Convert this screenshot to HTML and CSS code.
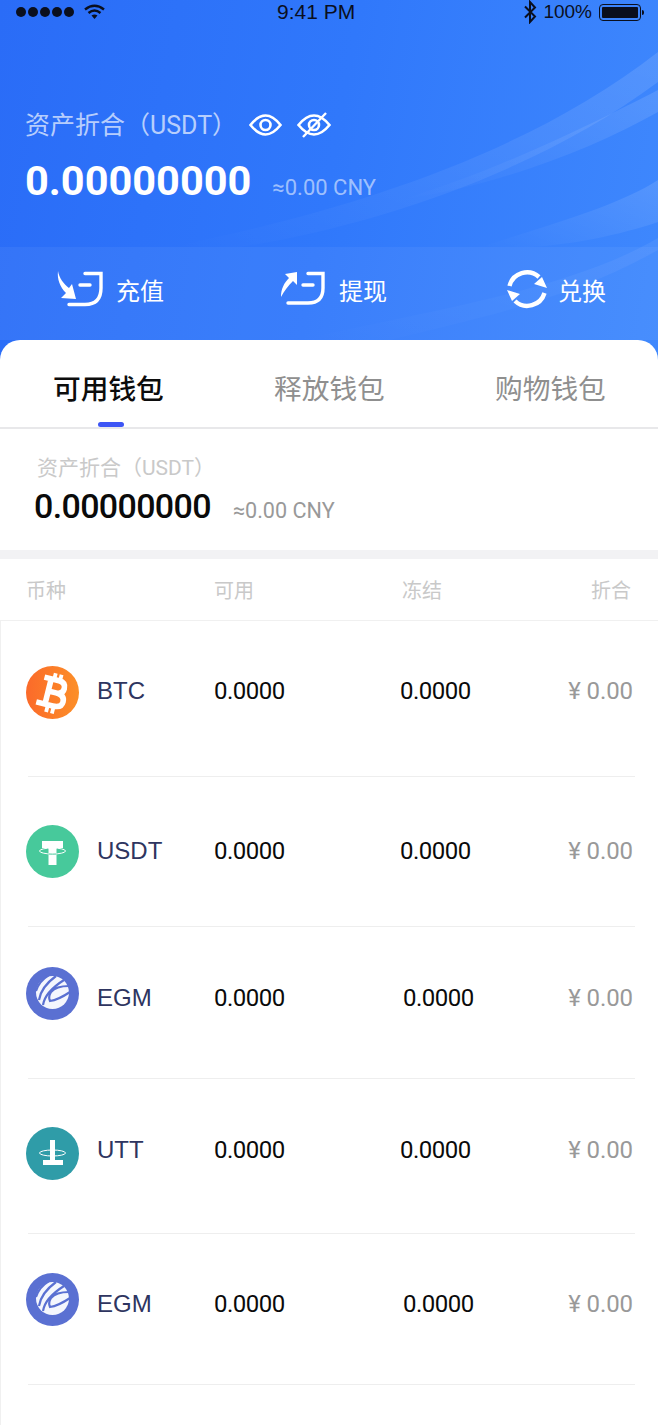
FILE: index.html
```html
<!DOCTYPE html>
<html>
<head>
	<meta http-equiv="Content-Type" content="text/html; charset=UTF-8">
	<title>资产</title>
	<link rel="stylesheet" href="styles.css">
</head>
<body>

<svg class="defs" width="0" height="0">
	<symbol id="egm-logo" viewBox="0 0 53 53">
		<circle cx="26.500" cy="26.500" r="26.500" fill="#5a70d2"/>
		<circle cx="26.500" cy="25.500" r="16.500" fill="#f4f6fd"/>
		<path d="M10 24 Q13 14 23 8 M13 33 Q15 20 30 9 M17 38 Q19 25 38 13 M43 19 Q30 19 25 25 Q22 30 24 34 Q32 33 44 25" fill="none" stroke="#5a70d2" stroke-width="2.200"/>
	</symbol>
</svg>

<header class="hero">
	<svg class="swoosh" viewBox="0 0 658 360" preserveAspectRatio="none">
		<defs>
			<linearGradient id="sw" x1="0" y1="1" x2="1" y2="0">
				<stop offset="0" stop-color="#fff" stop-opacity="0"/>
				<stop offset="1" stop-color="#fff" stop-opacity=".12"/>
			</linearGradient>
		</defs>
		<path d="M170 247 C330 215 520 160 658 52 V82 C540 170 380 225 240 247Z" fill="url(#sw)"/>
		<path d="M400 200 C500 170 600 120 658 90 V112 C590 150 500 185 400 200Z" fill="url(#sw)"/>
		<path d="M480 247 C550 225 620 205 658 180 V222 C620 235 570 245 530 247Z" fill="url(#sw)"/>
		<path d="M300 340 C430 310 570 290 658 238 V250 C570 300 470 320 390 340Z" fill="url(#sw)" opacity=".5"/>
	</svg>

	<div class="status">
		<div class="status-left">
			<span class="dots"><i></i><i></i><i></i><i></i><i></i></span>
			<svg width="21" height="16" viewBox="0 0 21 16"><path d="M1 5.500 Q10.500 -2 20 5.500 M4.500 9 Q10.500 4 16.500 9" fill="none" stroke="#0a0f1e" stroke-width="2.400"/><path d="M7.500 11.500 Q10.500 9.500 13.500 11.500 L10.500 15Z" fill="#0a0f1e"/></svg>
		</div>
		<div class="status-time">9:41 PM</div>
		<div class="status-right">
			<svg width="14" height="24" viewBox="0 0 14 24"><path d="M2 6.500 L12 16.500 L7 22 V2 L12 7.500 L2 17.500" fill="none" stroke="#0a0f1e" stroke-width="2"/></svg>
			<span>100%</span>
			<span class="battery"><i></i></span>
		</div>
	</div>

	<div class="total">
		<div class="total-label">
			<span>资产折合（USDT）</span>
			<svg width="33" height="22" viewBox="0 0 33 22"><path d="M1.500 11 Q16.500 -8 31.500 11 Q16.500 30 1.500 11Z" fill="none" stroke="#fff" stroke-width="2.600"/><circle cx="16.500" cy="11" r="5" fill="none" stroke="#fff" stroke-width="2.600"/></svg>
			<svg width="34" height="28" viewBox="0 0 34 28"><path d="M1.500 14 Q17 -5 32.500 14 Q17 33 1.500 14Z" fill="none" stroke="#fff" stroke-width="2.600"/><circle cx="17" cy="14" r="5" fill="none" stroke="#fff" stroke-width="2.600"/><path d="M6 26 L29 2" stroke="#fff" stroke-width="2.400"/></svg>
		</div>
		<div class="total-value">
			<strong>0.00000000</strong>
			<span>≈0.00 CNY</span>
		</div>
	</div>

	<nav class="actions">
		<a class="action">
			<svg width="48" height="40" viewBox="0 0 48 40"><path d="M30 4.500 H46 V19 Q46 35.500 30 35.500 H14 M25 16 H35" fill="none" stroke="#fff" stroke-width="3.400" stroke-linecap="round"/><path d="M3 2 C4 9 9 15 14 19 L17 15 L21 30 L6 29 L11 24 C5 18 2 10 3 2Z" fill="#fff"/></svg>
			<span>充值</span>
		</a>
		<a class="action">
			<svg width="48" height="40" viewBox="0 0 48 40"><path d="M30 4.500 H45 V19 Q45 34 30 34 H10 M25 16 H35" fill="none" stroke="#fff" stroke-width="3.400" stroke-linecap="round"/><path d="M3 28 C3 20 6 14 11 9 L7 5 L19 3 L19 16 L15 12 C10 17 6 22 3 28Z" fill="#fff"/></svg>
			<span>提现</span>
		</a>
		<a class="action action-swap">
			<svg width="44" height="40" viewBox="0 0 44 40"><path d="M4.500 17 A18 18 0 0 1 34 8 M39.500 24 A18 18 0 0 1 10 32" fill="none" stroke="#fff" stroke-width="4.400"/><path d="M29 15 L42 19 L37 8Z M15 25 L2 21 L7 32Z" fill="#fff"/></svg>
			<span>兑换</span>
		</a>
	</nav>
</header>

<main class="card">
	<div class="tabs">
		<div class="tab active">可用钱包</div>
		<div class="tab">释放钱包</div>
		<div class="tab">购物钱包</div>
	</div>

	<section class="summary">
		<div class="summary-label">资产折合（USDT）</div>
		<div class="summary-value">
			<strong>0.00000000</strong>
			<span>≈0.00 CNY</span>
		</div>
	</section>

	<div class="list-head">
		<span>币种</span>
		<span>可用</span>
		<span>冻结</span>
		<span>折合</span>
	</div>

	<div class="list">
		<div class="row row-btc">
			<div class="coin">
				<svg width="53" height="53" viewBox="0 0 53 53">
					<defs><linearGradient id="btc" x1="0" y1="0" x2="1" y2="0"><stop offset="0" stop-color="#fb6a2a"/><stop offset="1" stop-color="#fc8f28"/></linearGradient></defs>
					<circle cx="26.500" cy="26.500" r="26.500" fill="url(#btc)"/>
					<g transform="rotate(14 26.500 26.500)" fill="none" stroke="#fff">
						<path d="M22 13.500 V39.500 M15 13.500 H30 Q37 13.500 37 20 Q37 26 30 26 H22 M30 26 Q39 26 39 33 Q39 39.500 30 39.500 H13" stroke-width="5.600"/>
						<path d="M25 7 V12 M31 7 V12 M25 41 V47 M31 41 V47" stroke-width="3.800"/>
					</g>
				</svg>
				<span>BTC</span>
			</div>
			<span class="num">0.0000</span>
			<span class="num">0.0000</span>
			<span class="price">¥ 0.00</span>
		</div>

		<div class="row row-usdt">
			<div class="coin">
				<svg width="53" height="53" viewBox="0 0 53 53">
					<circle cx="26.500" cy="26.500" r="26.500" fill="#47c99b"/>
					<path d="M16 16 H37 V23 H30.500 V40 H22.500 V23 H16Z" fill="#fff"/>
					<ellipse cx="26.500" cy="26" rx="13" ry="3" fill="none" stroke="#fff" stroke-width="1"/>
					<path d="M22.500 29 Q26.500 29.300 30.500 29" fill="none" stroke="#47c99b" stroke-width="1"/>
				</svg>
				<span>USDT</span>
			</div>
			<span class="num">0.0000</span>
			<span class="num">0.0000</span>
			<span class="price">¥ 0.00</span>
		</div>

		<div class="row row-egm">
			<div class="coin">
				<svg width="53" height="53"><use href="#egm-logo"/></svg>
				<span>EGM</span>
			</div>
			<span class="num">0.0000</span>
			<span class="num num-shift">0.0000</span>
			<span class="price">¥ 0.00</span>
		</div>

		<div class="row row-utt">
			<div class="coin">
				<svg width="53" height="53" viewBox="0 0 53 53">
					<circle cx="26.500" cy="26.500" r="26.500" fill="#2f9ca8"/>
					<path d="M24 13 H29 V33 H37 V38 H17 V33 H24Z" fill="#fff"/>
					<ellipse cx="26.500" cy="26" rx="13" ry="3" fill="none" stroke="#fff" stroke-width="1"/>
				</svg>
				<span>UTT</span>
			</div>
			<span class="num">0.0000</span>
			<span class="num">0.0000</span>
			<span class="price">¥ 0.00</span>
		</div>

		<div class="row row-egm2">
			<div class="coin">
				<svg width="53" height="53"><use href="#egm-logo"/></svg>
				<span>EGM</span>
			</div>
			<span class="num">0.0000</span>
			<span class="num num-shift">0.0000</span>
			<span class="price">¥ 0.00</span>
		</div>
	</div>
</main>

</body>
</html>
```

FILE: styles.css
```css
html { background: #fff; margin: 0; padding: 0; }
body { margin: 0; height: 1425px; overflow: hidden; background: #fff; font-family: Roboto, "Noto Sans CJK SC", sans-serif; color: #000; }
.defs { display: block; height: 0; }

/* top blue area */
.hero { position: relative; height: 360px; background: linear-gradient(100deg, #2a6cf7 0%, #3078fb 50%, #3f88fd 100%); }
.swoosh { position: absolute; left: 0; top: 0; width: 658px; height: 360px; }

.status { position: relative; height: 24px; display: grid; grid-template-columns: 261px auto 1fr; align-items: center; padding: 0 17px 0 16px; color: #0a0f1e; font-family: "Liberation Sans", sans-serif; }
.status-left { display: flex; align-items: center; gap: 10px; }
.dots { display: flex; gap: 2px; }
.dots i { width: 10px; height: 10px; border-radius: 50%; background: #0a0f1e; }
.status-time { font-size: 21px; }
.status-right { display: flex; align-items: center; justify-content: flex-end; gap: 6px; font-size: 19px; }
.battery { position: relative; width: 42px; height: 17px; border: 1px solid #0a0f1e; border-radius: 4px; padding: 2px; margin-left: 1px; box-sizing: border-box; display: flex; }
.battery i { flex: 1; background: #0a0f1e; border-radius: 1px; }
.battery::after { content: ""; position: absolute; right: -4px; top: 5px; width: 2px; height: 5px; background: #0a0f1e; border-radius: 0 2px 2px 0; }

.total { position: relative; padding: 81px 0 0 25px; height: 223px; box-sizing: border-box; }
.total-label { display: flex; align-items: center; height: 36px; font-size: 25px; color: rgba(255, 255, 255, .68); }
.total-label svg { margin-top: 3px; }
.total-label svg:first-of-type { margin-left: 12px; }
.total-label svg:last-of-type { margin-left: 15px; }
.total-value { display: flex; align-items: baseline; margin-top: 16px; color: #fff; }
.total-value strong { font-size: 41.500px; font-weight: 700; line-height: 48px; }
.total-value span { margin-left: 21px; font-size: 22px; color: rgba(255, 255, 255, .55); }

.actions { position: relative; height: 93px; box-sizing: border-box; padding: 0 0 9px 55px; display: grid; grid-template-columns: 223px 227px 1fr; align-items: center; background: rgba(255, 255, 255, .05); }
.action { display: flex; align-items: center; gap: 13px; font-size: 24px; color: #fff; }
.action-swap { gap: 9px; }

/* white sheet */
.card { position: relative; margin-top: -20px; height: 1085px; background: #fff; border-radius: 20px 20px 0 0; }

.tabs { display: flex; gap: 110px; height: 87px; padding-left: 53px; border-bottom: 2px solid #e8e8ea; }
.tab { position: relative; width: 111px; font-size: 27.700px; line-height: 100px; color: #8f8f8f; white-space: nowrap; }
.tab.active { color: #0c0c0c; font-weight: 500; }
.tab.active::after { content: ""; position: absolute; left: 45px; bottom: 0; width: 26px; height: 5px; border-radius: 3px; background: #3d55f5; }

.summary { box-sizing: border-box; height: 130px; padding: 24px 0 0 34px; border-bottom: 9px solid #f2f2f4; }
.summary-label { padding-left: 3px; font-size: 21px; line-height: 30px; color: #c9c9c9; }
.summary-value { display: flex; align-items: baseline; margin-top: 2px; }
.summary-value strong { font-size: 34px; font-weight: 500; line-height: 42px; color: #0a0a0a; letter-spacing: -.65px; }
.summary-value span { margin-left: 22px; font-size: 21.600px; color: #999; }

.list-head { display: grid; grid-template-columns: 188px 188px 1fr auto; align-items: center; height: 61px; padding: 0 27px 0 26px; font-size: 20px; color: #c9c9c9; border-bottom: 1px solid #f0f0f0; }

.list { height: 804px; border-left: 1px solid #f0f0f0; }
.row { display: grid; grid-template-columns: 186px 186px 1fr auto; align-items: center; box-sizing: border-box; margin: 0 23px 0 27px; padding-right: 2px; border-bottom: 1px solid #eee; }
.row-btc { height: 156px; padding-bottom: 16px; }
.row-usdt { height: 150px; padding-bottom: 2px; }
.row-egm { height: 152px; padding-bottom: 10px; }
.row-utt { height: 155px; padding-bottom: 13px; }
.row-egm2 { height: 151px; padding-bottom: 11px; }

.coin { display: flex; align-items: center; gap: 18px; margin-left: -2px; font-family: "Liberation Sans", sans-serif; font-size: 24px; color: #2e3560; }
.row-egm .coin svg, .row-egm2 .coin svg { margin-bottom: 8px; }
.row-utt .coin svg { margin-top: 8px; }
.row-btc .coin svg { margin-top: 4px; }
.row-usdt .coin svg { margin-top: 2px; }
.num { font-size: 24px; letter-spacing: -.5px; color: #0a0a0a; }
.num-shift { margin-left: 3px; }
.price { font-size: 24px; letter-spacing: -.1px; color: #999; }
```
